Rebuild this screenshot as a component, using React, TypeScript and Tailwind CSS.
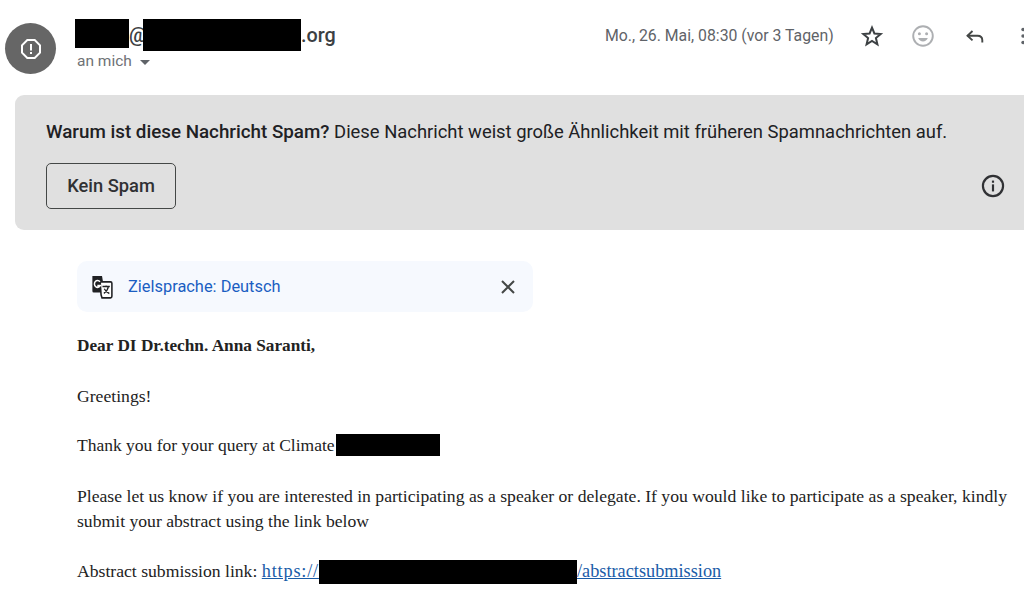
import React from "react";

function Star() {
  return (
    <svg width="24" height="24" viewBox="0 0 24 24" fill="none" stroke="#3c4043" strokeWidth="2" strokeLinejoin="miter">
      <path d="M12 3.600l2.400 5.900 6.300.5-4.800 4.100 1.500 6.200L12 17l-5.400 3.300 1.500-6.200-4.800-4.100 6.300-.5z" />
    </svg>
  );
}

function Smile() {
  return (
    <svg width="24" height="24" viewBox="0 0 24 24" fill="none">
      <circle cx="12" cy="12" r="9.800" stroke="#adafb2" strokeWidth="1.900" />
      <circle cx="8.400" cy="9.800" r="1.500" fill="#adafb2" />
      <circle cx="15.600" cy="9.800" r="1.500" fill="#adafb2" />
      <path d="M7.200 14h9.600c-.8 2.200-2.700 3.400-4.800 3.400s-4-1.200-4.800-3.400z" fill="#adafb2" />
    </svg>
  );
}

function Reply() {
  return (
    <svg width="24" height="24" viewBox="0 0 24 24" fill="none" stroke="#444746" strokeWidth="1.900">
      <path d="M9.500 7l-5 4.700 5 4.700" />
      <path d="M4.500 11.700h10c3 0 4.800 1.800 4.800 4.600v2.200" />
    </svg>
  );
}

function Translate() {
  return (
    <svg width="22" height="24" viewBox="0 0 24 24" preserveAspectRatio="none">
      <path d="M1.500 1h10.500l3.200 16.500H3A1.500 1.500 0 0 1 1.500 16z" fill="#202124" />
      <path d="M10 6.800h11.300A1.500 1.500 0 0 1 22.800 8.300v13a1.500 1.500 0 0 1-1.500 1.500H12l-1-3z" fill="#fff" stroke="#202124" strokeWidth="1.700" />
      <path d="M12.500 11.500h8M16.500 10.500v1.500M19 11.700c-.7 3-2.500 5.300-5 6.600M14.500 13.700c1 2 2.700 3.700 5.500 4.800" fill="none" stroke="#202124" strokeWidth="1.400" />
      <path d="M9.800 6.800A3.400 3.400 0 1 0 10.100 10.600H6.900" fill="none" stroke="#fff" strokeWidth="1.600" />
    </svg>
  );
}

export default function App() {
  return (
    <div className="w-[1024px] h-[597px] overflow-hidden bg-white font-['Roboto',sans-serif]">
      <div className="w-[1060px]">
        <header className="flex items-start h-[95px]">
          <div className="ml-[5px] mt-[23px] w-[51px] h-[51px] rounded-full bg-[#666666] flex items-center justify-center shrink-0">
            <svg width="24" height="24" viewBox="0 0 24 24" fill="none">
              <path d="M8.300 3h7.400L21 8.300v7.400L15.700 21H8.300L3 15.700V8.300z" stroke="#fff" strokeWidth="2" />
              <rect x="11" y="7" width="2" height="6.500" fill="#fff" />
              <rect x="11" y="15" width="2" height="2" fill="#fff" />
            </svg>
          </div>
          <div className="ml-[19px] mt-[19px] w-[510px] shrink-0">
            <div className="flex items-start h-[32px] text-[19.800px] font-medium text-[#3c4043]">
              <span className="w-[54px] h-[29px] bg-black" />
              <span className="w-[14px] mt-[3px] leading-[28px]">@</span>
              <span className="w-[158px] h-[32px] bg-black" />
              <span className="mt-[3px] leading-[28px]">.org</span>
            </div>
            <div className="flex items-center h-[20px] mt-[1px] ml-[2px] text-[15.500px] text-[#6f7276]">
              <span>an mich</span>
              <span className="ml-[8px] mt-[1px] w-0 h-0 border-x-[5px] border-x-transparent border-t-[5px] border-t-[#5f6368]" />
            </div>
          </div>
          <div className="mt-[24px] ml-[20px] text-[15.800px] leading-[24px] text-[#5f6368] whitespace-nowrap w-[255px] shrink-0">
            Mo., 26. Mai, 08:30 (vor 3 Tagen)
          </div>
          <div className="mt-[24px] flex items-center">
            <Star />
            <span className="ml-[27px]"><Smile /></span>
            <span className="ml-[28px]"><Reply /></span>
            <svg className="ml-[24px]" width="24" height="24" viewBox="0 0 24 24" fill="#5f6368">
              <circle cx="12" cy="5.500" r="1.700" />
              <circle cx="12" cy="12" r="1.700" />
              <circle cx="12" cy="18.500" r="1.700" />
            </svg>
          </div>
        </header>

        <section className="ml-[15px] h-[135px] w-[1030px] rounded-[9px] bg-[#e0e0e0] pl-[31px] pt-[24px] relative">
          <p className="text-[18.400px] leading-[26px] text-[#202124] whitespace-nowrap">
            <span className="font-medium text-[18.800px]">Warum ist diese Nachricht Spam?</span> Diese Nachricht weist große Ähnlichkeit mit früheren Spamnachrichten auf.
          </p>
          <div className="flex items-center mt-[18px]">
            <button className="w-[130px] h-[46px] rounded-[5px] border border-[#444746] text-[18.300px] font-medium text-[#303134]">
              Kein Spam
            </button>
            <svg className="ml-[804px]" width="26" height="26" viewBox="0 0 24 24" fill="none">
              <circle cx="12" cy="12" r="9.300" stroke="#303134" strokeWidth="2" />
              <rect x="11" y="10.500" width="2" height="6.500" fill="#303134" />
              <rect x="11" y="7" width="2" height="2" fill="#303134" />
            </svg>
          </div>
        </section>

        <main className="ml-[77px] mt-[31px]">
          <div className="w-[456px] h-[51px] rounded-[10px] bg-[#f6f9fe] flex items-center pl-[14px] pr-[15px]">
            <Translate />
            <span className="ml-[15px] mt-[1px] text-[16.400px] font-normal text-[#1a5ec2] flex-1">Zielsprache: Deutsch</span>
            <svg width="20" height="20" viewBox="0 0 20 20" stroke="#444746" strokeWidth="2">
              <path d="M4 4l12 12M16 4L4 16" />
            </svg>
          </div>

          <div className="mt-[21px] w-[940px] font-['Liberation_Serif',serif] text-[17.650px] leading-[25px] text-[#222222]">
            <p className="font-bold h-[25px] text-[17.250px]">Dear DI Dr.techn. Anna Saranti,</p>
            <p className="mt-[26px] h-[25px]">Greetings!</p>
            <p className="mt-[24px] h-[25px] flex items-center text-[17.500px]">
              Thank you for your query at Climate
              <span className="ml-[1px] mb-[2px] w-[104px] h-[22px] bg-black" />
            </p>
            <p className="mt-[26px]">
              Please let us know if you are interested in participating as a speaker or delegate. If you would like to participate as a speaker, kindly submit your abstract using the link below
            </p>
            <p className="mt-[25px] h-[25px] flex items-center whitespace-pre">
              <span>Abstract submission link: </span>
              <span className="text-[#1a5ca8] underline text-[18.300px] tracking-[0.800px]">https://</span>
              <span className="w-[258px] h-[24px] bg-black" />
              <span className="text-[#1a5ca8] underline text-[18.300px]">/abstractsubmission</span>
            </p>
          </div>
        </main>
      </div>
    </div>
  );
}
